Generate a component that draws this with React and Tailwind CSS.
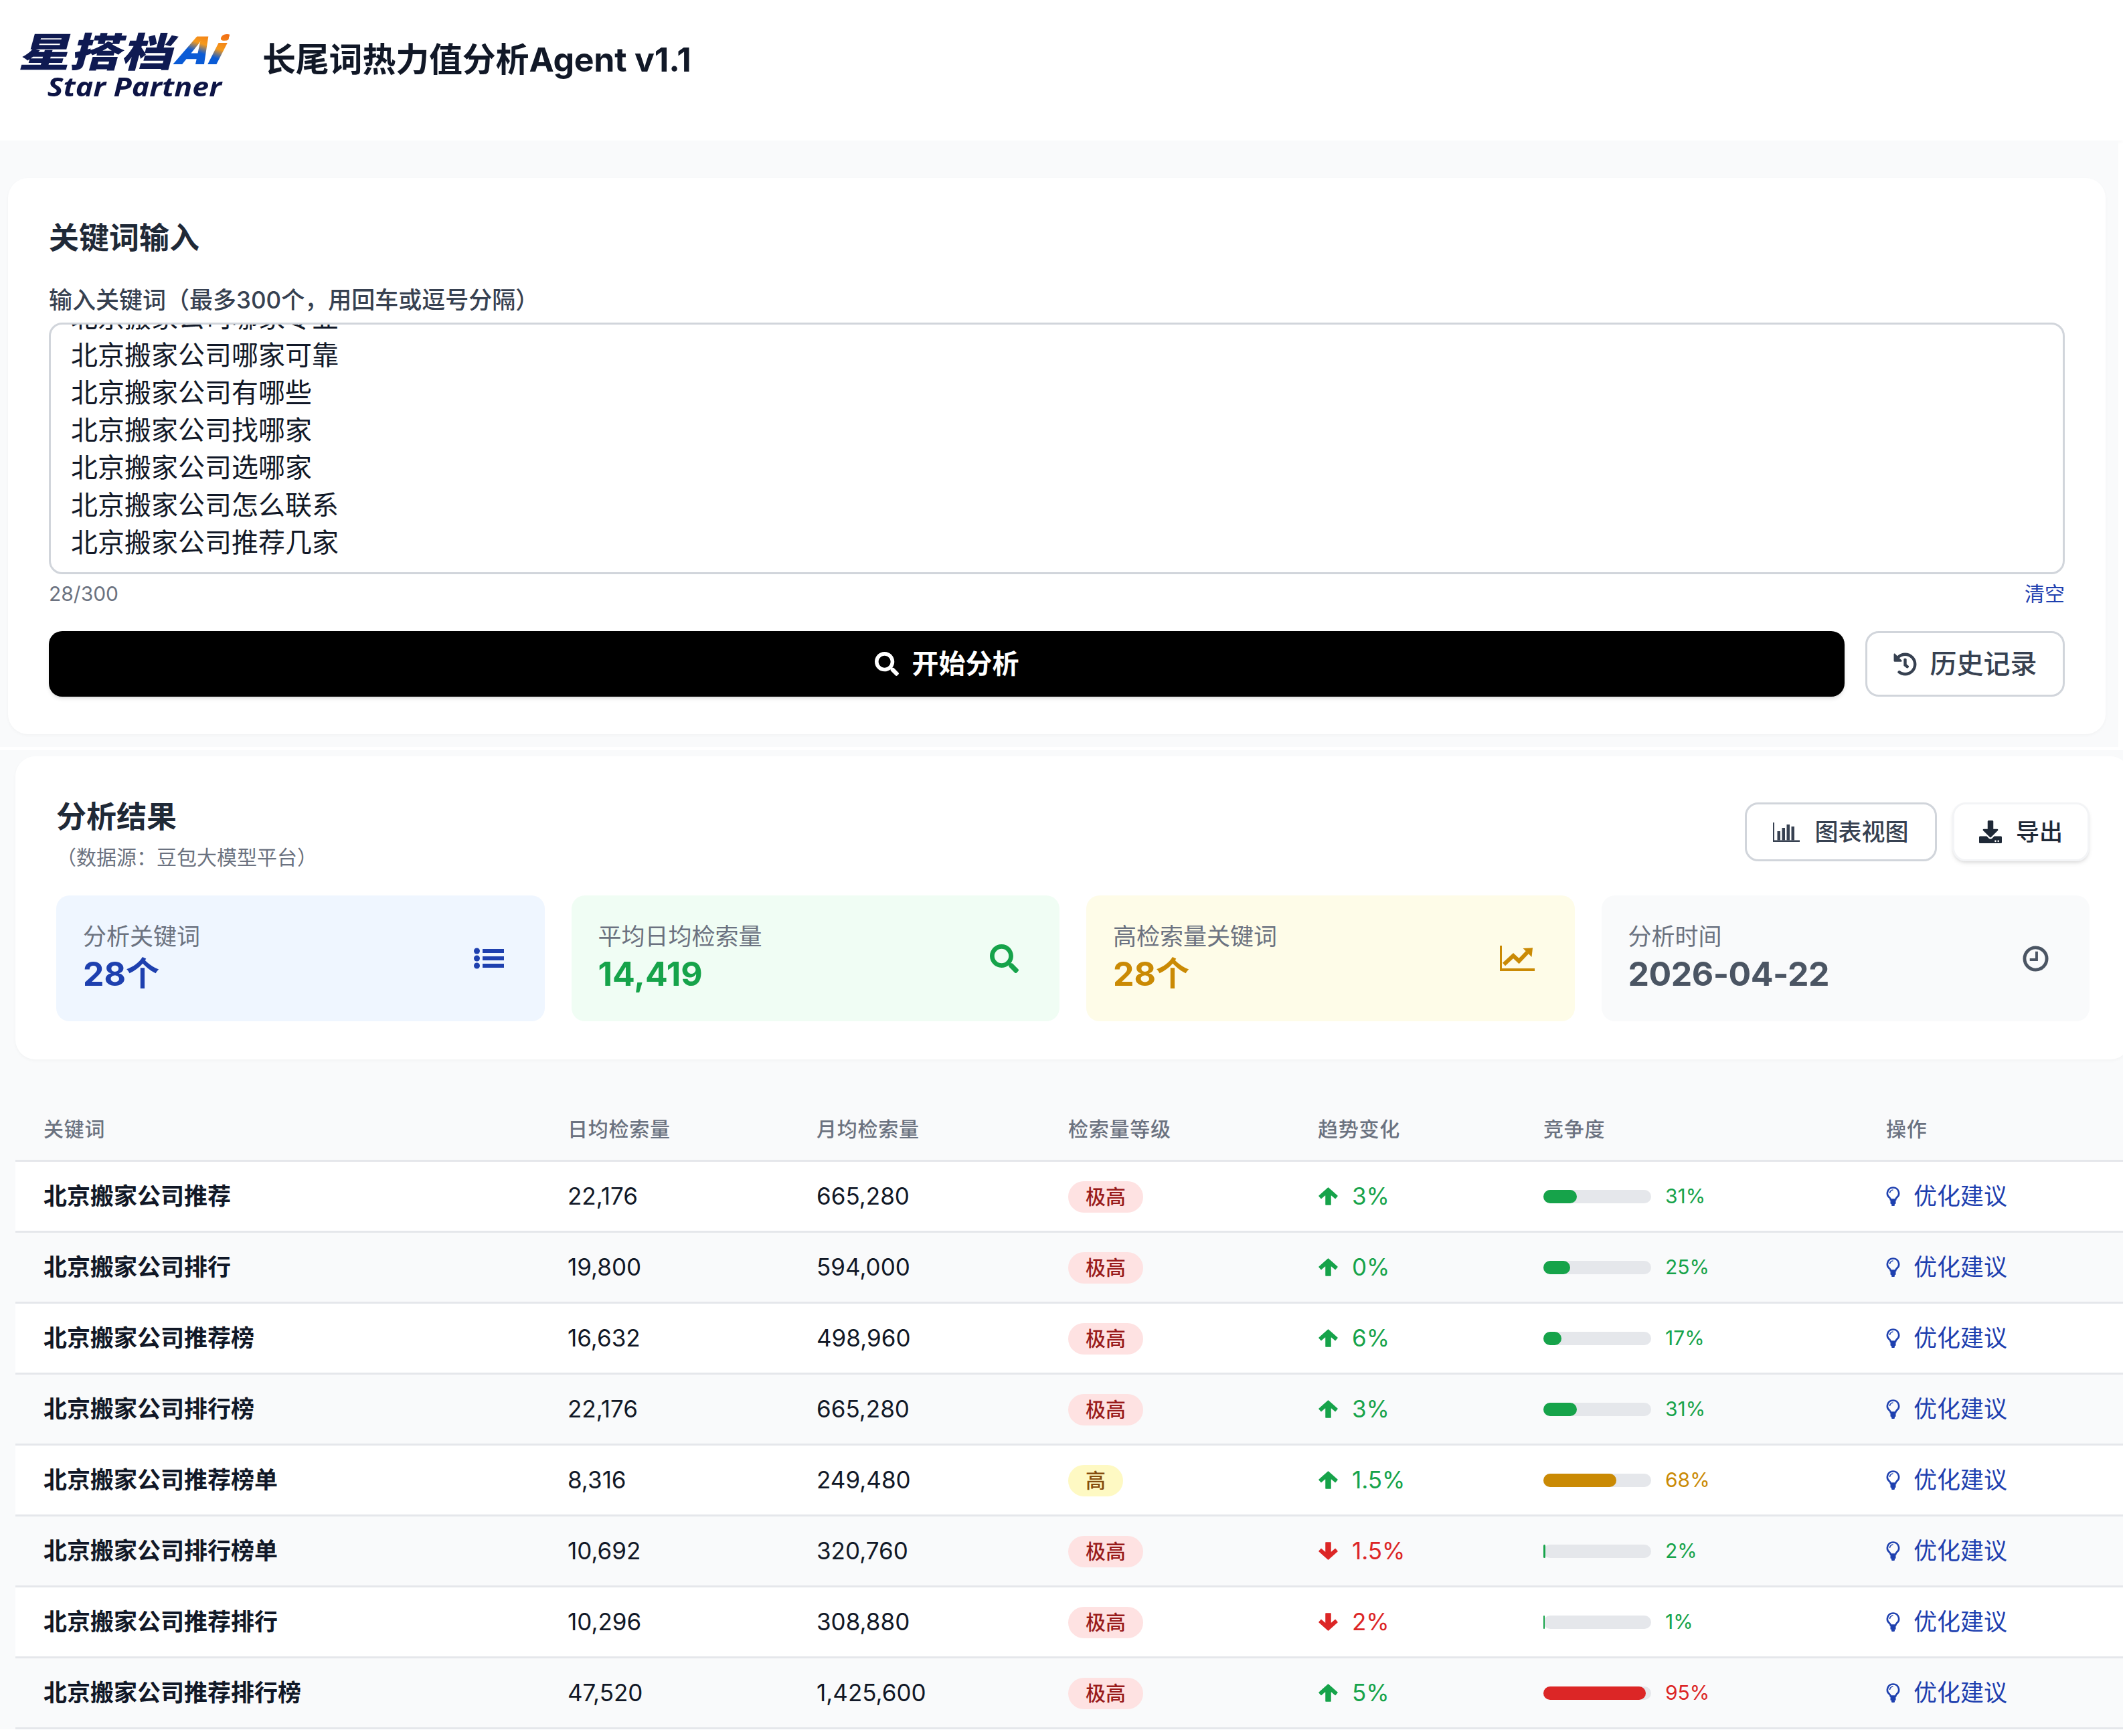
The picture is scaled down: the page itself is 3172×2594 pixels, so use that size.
import { FaDownload, FaHistory, FaSearch } from "react-icons/fa";

const inputLines = [
  "北京搬家公司哪家专业",
  "北京搬家公司哪家可靠",
  "北京搬家公司有哪些",
  "北京搬家公司找哪家",
  "北京搬家公司选哪家",
  "北京搬家公司怎么联系",
  "北京搬家公司推荐几家",
];

const rows = [
  { name: "北京搬家公司推荐", daily: "22,176", monthly: "665,280", level: "极高", up: true, trend: "3%", comp: 31 },
  { name: "北京搬家公司排行", daily: "19,800", monthly: "594,000", level: "极高", up: true, trend: "0%", comp: 25 },
  { name: "北京搬家公司推荐榜", daily: "16,632", monthly: "498,960", level: "极高", up: true, trend: "6%", comp: 17 },
  { name: "北京搬家公司排行榜", daily: "22,176", monthly: "665,280", level: "极高", up: true, trend: "3%", comp: 31 },
  { name: "北京搬家公司推荐榜单", daily: "8,316", monthly: "249,480", level: "高", up: true, trend: "1.5%", comp: 68 },
  { name: "北京搬家公司排行榜单", daily: "10,692", monthly: "320,760", level: "极高", up: false, trend: "1.5%", comp: 2 },
  { name: "北京搬家公司推荐排行", daily: "10,296", monthly: "308,880", level: "极高", up: false, trend: "2%", comp: 1 },
  { name: "北京搬家公司推荐排行榜", daily: "47,520", monthly: "1,425,600", level: "极高", up: true, trend: "5%", comp: 95 },
];

// hand drawn, the icon packages only have the newer thinner versions of these
function ListIcon() {
  return (
    <svg viewBox="0 0 45 32" className="h-[32px] w-[45px]" fill="currentColor">
      <circle cx="4.5" cy="5" r="4.5" />
      <circle cx="4.5" cy="16" r="4.5" />
      <circle cx="4.5" cy="27" r="4.5" />
      <rect x="13" y="2" width="32" height="6" />
      <rect x="13" y="13" width="32" height="6" />
      <rect x="13" y="24" width="32" height="6" />
    </svg>
  );
}

function LineChartIcon() {
  return (
    <svg viewBox="0 0 52 38" className="h-[38px] w-[52px]" fill="currentColor">
      <path d="M0 0h3v34h49v4H0z" />
      <path d="M6 28 20 15l8.500 8L41 10" fill="none" stroke="currentColor" strokeWidth="6" />
      <path d="M34.500 4 49 3.300 47.500 17z" />
    </svg>
  );
}

function BarChartIcon() {
  return (
    <svg viewBox="0 0 40 29" className="h-[29px] w-[40px]" fill="currentColor">
      <path d="M0 0h2v26.500h38V29H0z" />
      <rect x="6.500" y="13" width="4.500" height="13.500" />
      <rect x="13.500" y="8" width="4.500" height="18.500" />
      <rect x="20.500" y="3" width="4.500" height="23.500" />
      <rect x="27.500" y="6" width="4.500" height="20.500" />
    </svg>
  );
}

function ClockIcon() {
  return (
    <svg viewBox="0 0 40 40" className="h-[39px] w-[39px]" fill="none" stroke="currentColor">
      <circle cx="20" cy="20" r="17" strokeWidth="5" />
      <path d="M21.500 9v12.500H11" strokeWidth="4" />
    </svg>
  );
}

function ArrowIcon({ down }) {
  return (
    <svg viewBox="0 0 31 27" className={`h-[27px] w-[31px] ${down ? "rotate-180" : ""}`} fill="currentColor" stroke="currentColor" strokeWidth="1.500" strokeLinejoin="round">
      <path d="M15.500 1 29 13 26 16.500 19 10.500V26h-7V10.500L5 16.500 2 13z" />
    </svg>
  );
}

function BulbIcon() {
  return (
    <svg viewBox="0 0 21 29" className="h-[29px] w-[21px]" fill="currentColor">
      <path d="M10.500 1.500a8.500 8.500 0 0 0-5 15.400c.8.700 1.200 1.600 1.300 2.600h7.400c.1-1 .5-1.900 1.300-2.600a8.500 8.500 0 0 0-5-15.400z" fill="none" stroke="currentColor" strokeWidth="2.600" />
      <path d="M10.500 5a5 5 0 0 0-5 5" fill="none" stroke="currentColor" strokeWidth="1.500" />
      <rect x="6.500" y="19.500" width="8" height="6.500" rx="1" />
      <rect x="8" y="25.500" width="5" height="3.500" rx="1.500" />
    </svg>
  );
}

const stats = [
  { label: "分析关键词", value: "28个", bg: "bg-[#eff6ff]", color: "text-[#1e40af]", icon: <ListIcon />, pr: "pr-[61px]" },
  { label: "平均日均检索量", value: "14,419", bg: "bg-[#f0fdf4]", color: "text-[#16a34a]", icon: <FaSearch className="text-[43px]" />, pr: "pr-[61px]" },
  { label: "高检索量关键词", value: "28个", bg: "bg-[#fefce8]", color: "text-[#ca8a04]", icon: <LineChartIcon />, pr: "pr-[60px]" },
  { label: "分析时间", value: "2026-04-22", bg: "bg-[#f9fafb]", color: "text-[#4b5563] tracking-[-0.5px]", icon: <ClockIcon />, pr: "pr-[61px]" },
];

function compStyle(v) {
  if (v >= 80) return { bar: "bg-[#dc2626]", text: "text-[#dc2626]" };
  if (v >= 50) return { bar: "bg-[#ca8a04]", text: "text-[#ca8a04]" };
  return { bar: "bg-[#16a34a]", text: "text-[#16a34a]" };
}

function Logo() {
  return (
    <div className="flex w-[358px] flex-col pt-[40px]">
      <div className="flex h-[68px] items-center">
        <span className="inline-block w-[231px] origin-left -skew-x-12 scale-x-[1.28] whitespace-nowrap font-[family-name:'Noto_Sans_CJK_SC',sans-serif] text-[60px] font-black leading-[68px] text-[#0f1a52]">
          星搭档
        </span>
        <span className="inline-block -skew-x-12 scale-x-[1.2] bg-linear-[20deg] from-[#0a5bd6] from-45% via-[#f59a1b] via-60% to-[#f0560f] bg-clip-text pl-[8px] font-[family-name:'Open_Sans',sans-serif] text-[58px] font-extrabold italic leading-[68px] text-transparent">
          Ai
        </span>
      </div>
      <div className="origin-left scale-x-[1.115] whitespace-nowrap pl-[33px] font-[family-name:'Open_Sans',sans-serif] text-[40px] font-bold italic leading-[42px] text-[#0d1445]">
        Star Partner
      </div>
    </div>
  );
}

export default function App() {
  return (
    <div className="h-[2594px] w-[3172px] overflow-hidden bg-white font-[family-name:Inter,'Noto_Sans_CJK_SC',sans-serif] text-[#111827]">
      {/* Header */}
      <header className="flex h-[210px] items-start bg-white pl-[34px] shadow-[0_2px_5px_rgba(0,0,0,0.03)]">
        <Logo />
        <h1 className="pt-[56px] text-[50px] font-bold leading-[66px] tracking-[-0.2px] text-[#111827]">长尾词热力值分析Agent v1.1</h1>
      </header>

      {/* Input */}
      <section className="w-[3165px] bg-[#f9fafb] pb-[19px] pl-[12px] pt-[56px]">
        <div className="h-[831px] w-[3134px] rounded-[30px] bg-white px-[61px] pt-[62px] shadow-[0_2px_5px_rgba(0,0,0,0.03)]">
          <h2 className="mb-[39px] text-[45px] font-semibold leading-[56px] text-[#1f2937]">关键词输入</h2>
          <label className="mb-[9px] block text-[35px] font-medium leading-[50px] text-[#374151]">
            输入关键词（最多300个，用回车或逗号分隔）
          </label>
          <div className="flex h-[376px] flex-col justify-end overflow-hidden rounded-[20px] border-[3px] border-[#d1d5db] px-[30px] pb-[16px]">
            {inputLines.map((line) => (
              <div key={line} className="shrink-0 text-[40px] leading-[56px] text-[#111827]">
                {line}
              </div>
            ))}
          </div>
          <div className="mb-[36px] mt-[9px] flex justify-between text-[30px] leading-[40px]">
            <span className="text-[#6b7280]">28/300</span>
            <span className="text-[#1e40af]">清空</span>
          </div>
          <div className="flex gap-[31px]">
            <button className="flex h-[98px] flex-1 items-center justify-center gap-[20px] rounded-[20px] bg-black text-[40px] font-semibold text-white shadow-md">
              <FaSearch className="text-[36px]" />
              开始分析
            </button>
            <button className="flex h-[98px] w-[298px] items-center justify-center gap-[20px] rounded-[20px] border-[3px] border-[#d1d5db] bg-white text-[40px] font-medium text-[#374151]">
              <FaHistory className="text-[35px]" />
              历史记录
            </button>
          </div>
        </div>
      </section>

      {/* Results */}
      <section className="mt-[5px] bg-[#f9fafb] pt-[9px]">
        <div className="ml-[23px] h-[453px] w-[3160px] rounded-[30px] bg-white px-[61px] pt-[63px] shadow-[0_2px_5px_rgba(0,0,0,0.03)]">
          <div className="mb-[37px] flex items-start justify-between">
            <div>
              <h2 className="text-[45px] font-bold leading-[56px] text-[#1f2937]">分析结果</h2>
              <p className="mt-[12px] text-[30px] leading-[40px] text-[#6b7280]">（数据源：豆包大模型平台）</p>
            </div>
            <div className="mt-[6px] flex gap-[23px]">
              <button className="flex h-[88px] w-[287px] items-center justify-center gap-[22px] rounded-[20px] border-[3px] border-[#d1d5db] bg-white text-[35px] font-medium text-[#374151]">
                <BarChartIcon />
                图表视图
              </button>
              <button className="flex h-[88px] w-[205px] items-center justify-center gap-[21px] rounded-[20px] border-[3px] border-[#f3f4f6] bg-white text-[35px] font-medium text-[#1f2937] shadow-md">
                <FaDownload className="text-[34px]" />
                导出
              </button>
            </div>
          </div>

          <div className="grid grid-cols-4 gap-[40px]">
            {stats.map((s) => (
              <div key={s.label} className={`flex h-[188px] items-center justify-between rounded-[20px] pl-[40px] ${s.pr} ${s.bg}`}>
                <div className="-translate-y-[3px]">
                  <div className="text-[35px] leading-[50px] text-[#6b7280]">{s.label}</div>
                  <div className={`mt-[1px] text-[50px] font-bold leading-[60px] ${s.color}`}>{s.value}</div>
                </div>
                <div className={s.color}>{s.icon}</div>
              </div>
            ))}
          </div>
        </div>

        {/* Table */}
        <table className="ml-[23px] mt-[58px] w-[3149px] table-fixed border-separate border-spacing-0">
          <thead>
            <tr className="h-[95px] bg-[#f9fafb] text-left text-[30px] tracking-wide text-[#6b7280]">
              <th className="w-[783px] border-b-[3px] border-[#e5e7eb] pl-[42px] font-medium">关键词</th>
              <th className="w-[372px] border-b-[3px] border-[#e5e7eb] pl-[42px] font-medium">日均检索量</th>
              <th className="w-[376px] border-b-[3px] border-[#e5e7eb] pl-[42px] font-medium">月均检索量</th>
              <th className="w-[373px] border-b-[3px] border-[#e5e7eb] pl-[42px] font-medium">检索量等级</th>
              <th className="w-[337px] border-b-[3px] border-[#e5e7eb] pl-[42px] font-medium">趋势变化</th>
              <th className="w-[512px] border-b-[3px] border-[#e5e7eb] pl-[42px] font-medium">竞争度</th>
              <th className="border-b-[3px] border-[#e5e7eb] pl-[42px] font-medium">操作</th>
            </tr>
          </thead>
          <tbody>
            {rows.map((r, i) => {
              const comp = compStyle(r.comp);
              return (
                <tr key={r.name} className={`h-[106px] text-[35px] text-[#111827] ${i % 2 ? "bg-[#f9fafb]" : "bg-white"}`}>
                  <td className="border-b-[3px] border-[#e5e7eb] pl-[42px] font-semibold">{r.name}</td>
                  <td className="border-b-[3px] border-[#e5e7eb] pl-[42px]">{r.daily}</td>
                  <td className="border-b-[3px] border-[#e5e7eb] pl-[42px]">{r.monthly}</td>
                  <td className="border-b-[3px] border-[#e5e7eb] pl-[42px]">
                    <span
                      className={`inline-flex h-[47px] -translate-y-[1px] items-center rounded-full px-[26px] text-[30px] font-medium ${
                        r.level === "高" ? "bg-[#fef9c3] text-[#854d0e]" : "bg-[#fee2e2] text-[#991b1b]"
                      }`}
                    >
                      {r.level}
                    </span>
                  </td>
                  <td className="border-b-[3px] border-[#e5e7eb] pl-[42px]">
                    <span className={`flex items-center gap-[20px] ${r.up ? "text-[#16a34a]" : "text-[#dc2626]"}`}>
                      <ArrowIcon down={!r.up} />
                      {r.trend}
                    </span>
                  </td>
                  <td className="border-b-[3px] border-[#e5e7eb] pl-[42px]">
                    <div className="flex items-center gap-[21px]">
                      <div className="h-[20px] w-[161px] rounded-full bg-[#e5e7eb]">
                        <div className={`h-full rounded-full ${comp.bar}`} style={{ width: `${r.comp}%` }} />
                      </div>
                      <span className={`text-[30px] ${comp.text}`}>{r.comp}%</span>
                    </div>
                  </td>
                  <td className="border-b-[3px] border-[#e5e7eb] pl-[42px]">
                    <span className="flex items-center gap-[20px] text-[#1e40af]">
                      <BulbIcon />
                      优化建议
                    </span>
                  </td>
                </tr>
              );
            })}
          </tbody>
        </table>
      </section>
    </div>
  );
}
